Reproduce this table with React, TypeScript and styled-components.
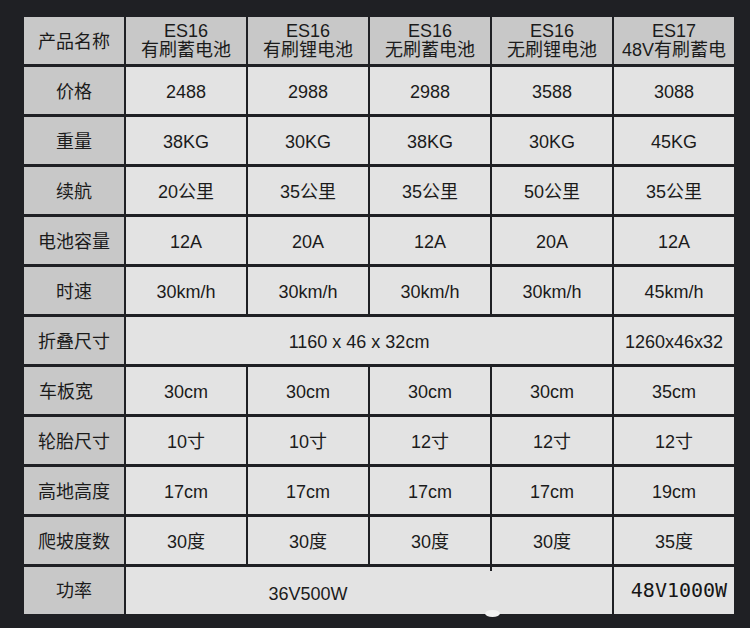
import React from "react";
import styled, { createGlobalStyle, css } from "styled-components";

const GlobalStyle = createGlobalStyle`
  html, body {
    margin: 0;
    padding: 0;
    background: #1f2024;
  }
  body {
    font-family: "Liberation Sans", Arial, "Noto Sans CJK SC", sans-serif;
    color: #1b1b1b;
  }
`;

const Page = styled.div`
  width: 750px;
  height: 628px;
  box-sizing: border-box;
  padding: 17px 16px 0 24px;
  background: #1f2024;
  overflow: hidden;
`;

const Table = styled.div`
  display: grid;
  grid-template-columns: 100px repeat(5, 120px);
  grid-auto-rows: 47px;
  column-gap: 2px;
  row-gap: 3px;
  width: 710px;
`;

type CellProps = {
  $head?: boolean;
  $span?: number;
  $align?: "left" | "center";
  $shift?: number;
  $mono?: boolean;
  $drop?: number;
};

const Cell = styled.div<CellProps>`
  position: relative;
  display: flex;
  flex-direction: column;
  align-items: ${(p) => (p.$align === "left" ? "flex-start" : "center")};
  justify-content: center;
  box-sizing: border-box;
  background: ${(p) => (p.$head ? "#c8c8c8" : "#e3e3e3")};
  font-size: 18px;
  line-height: 19px;
  white-space: nowrap;
  grid-column: ${(p) => (p.$span ? `span ${p.$span}` : "auto")};
  padding-left: ${(p) =>
    p.$align === "left" ? 15 : p.$shift && p.$shift > 0 ? p.$shift : 0}px;
  padding-right: ${(p) => (p.$shift && p.$shift < 0 ? -p.$shift : 0)}px;
  padding-top: ${(p) => (p.$drop !== undefined ? p.$drop : 4)}px;
  ${(p) =>
    p.$mono &&
    css`
      font-family: "DejaVu Sans Mono", "Liberation Mono", monospace;
      font-size: 20px;
      color: #161616;
    `}
`;

const PowerCell = styled(Cell)`
  &::before {
    content: "";
    position: absolute;
    left: 364px;
    top: 0;
    width: 2px;
    height: 4px;
    background: #1f2024;
  }
  &::after {
    content: "";
    position: absolute;
    left: 359px;
    bottom: -3px;
    width: 15px;
    height: 7px;
    border-radius: 50%;
    background: #f2f2f2;
  }
`;

const Line = styled.span`
  display: block;
`;

type Row = {
  label: string;
  labelAlign?: "left" | "center";
  cells: { text: string; span?: number; shift?: number; mono?: boolean; drop?: number }[];
};

const headers: [string, string][] = [
  ["ES16", "有刷蓄电池"],
  ["ES16", "有刷锂电池"],
  ["ES16", "无刷蓄电池"],
  ["ES16", "无刷锂电池"],
  ["ES17", "48V有刷蓄电"],
];

const simple = (vals: string[]) => vals.map((text) => ({ text }));

const rows: Row[] = [
  { label: "价格", cells: simple(["2488", "2988", "2988", "3588", "3088"]) },
  { label: "重量", cells: simple(["38KG", "30KG", "38KG", "30KG", "45KG"]) },
  { label: "续航", cells: simple(["20公里", "35公里", "35公里", "50公里", "35公里"]) },
  { label: "电池容量", cells: simple(["12A", "20A", "12A", "20A", "12A"]) },
  { label: "时速", cells: simple(["30km/h", "30km/h", "30km/h", "30km/h", "45km/h"]) },
  {
    label: "折叠尺寸",
    cells: [
      { text: "1160 x 46 x 32cm", span: 4, shift: -20 },
      { text: "1260x46x32" },
    ],
  },
  {
    label: "车板宽",
    labelAlign: "left",
    cells: simple(["30cm", "30cm", "30cm", "30cm", "35cm"]),
  },
  { label: "轮胎尺寸", cells: simple(["10寸", "10寸", "12寸", "12寸", "12寸"]) },
  { label: "高地高度", cells: simple(["17cm", "17cm", "17cm", "17cm", "19cm"]) },
  { label: "爬坡度数", cells: simple(["30度", "30度", "30度", "30度", "35度"]) },
];

export default function App() {
  return (
    <>
      <GlobalStyle />
      <Page>
        <Table>
          <Cell $head>产品名称</Cell>
          {headers.map(([model, kind], i) => (
            <Cell $head $drop={0} key={`h${i}`}>
              <Line>{model}</Line>
              <Line>{kind}</Line>
            </Cell>
          ))}

          {rows.map((row) => (
            <React.Fragment key={row.label}>
              <Cell $head $align={row.labelAlign}>
                {row.label}
              </Cell>
              {row.cells.map((c, i) => (
                <Cell
                  key={`${row.label}${i}`}
                  $span={c.span}
                  $shift={c.shift}
                  $mono={c.mono}
                  $drop={c.drop}
                >
                  {c.text}
                </Cell>
              ))}
            </React.Fragment>
          ))}

          <Cell $head $drop={2}>功率</Cell>
          <PowerCell $span={4} $shift={-122} $drop={7}>
            36V500W
          </PowerCell>
          <Cell $mono $shift={10} $drop={0}>
            48V1000W
          </Cell>
        </Table>
      </Page>
    </>
  );
}
